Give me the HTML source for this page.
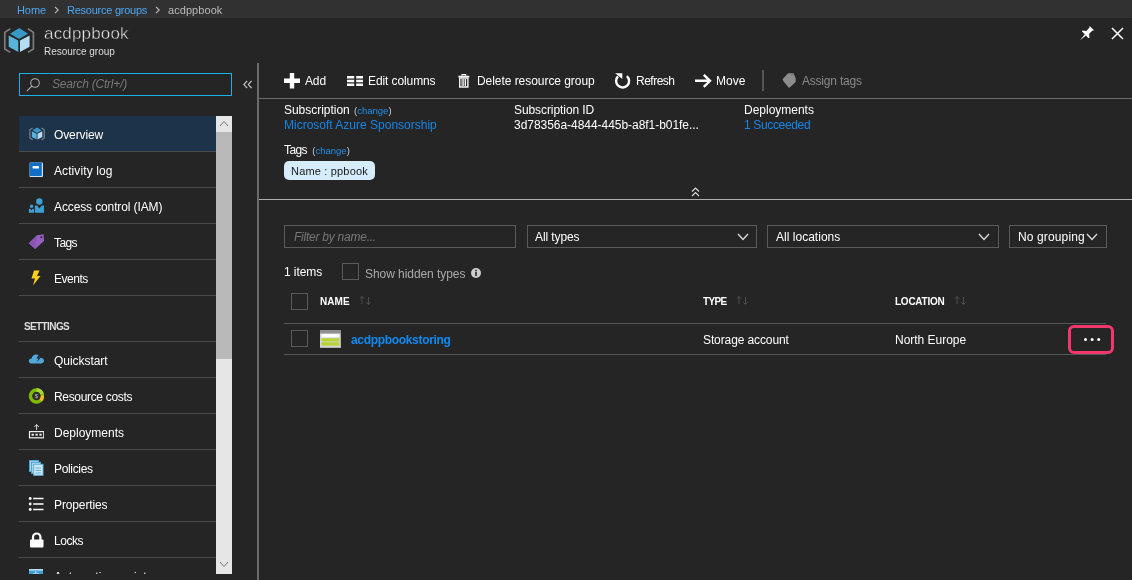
<!DOCTYPE html>
<html><head><meta charset="utf-8">
<style>
*{box-sizing:border-box;margin:0;padding:0}
html,body{width:1132px;height:580px;overflow:hidden;background:#252525;font-family:"Liberation Sans",sans-serif;color:#fff;font-size:12px}
.abs{position:absolute}
#bc{left:0;top:0;width:1132px;height:18px;background:#313131;font-size:11px;line-height:20px;color:#ccc}
#bc span{position:absolute;top:0;white-space:nowrap}
.lnk{color:#4da6f0}
.t{position:absolute;white-space:nowrap;line-height:1}
.hl{position:absolute;height:1px;background:#4a4a4a}
.mi{position:absolute;left:19px;width:197px;height:36px;border-bottom:1px solid #4a4a4a}
.mi .lab{position:absolute;left:35px;top:12px;font-size:12px;line-height:14px;white-space:nowrap}
.mi svg{position:absolute;left:9px;top:10px}
.tb{position:absolute;top:74px;font-size:12px;line-height:14px;white-space:nowrap}
.box{position:absolute;top:225px;height:23px;border:1px solid #5a5a5a;font-size:12px;line-height:23px;padding-left:7px;white-space:nowrap}
.cb{position:absolute;width:17px;height:17px;border:1px solid #5a5a5a}
.th{position:absolute;top:296px;font-size:10px;font-weight:bold;line-height:11px;white-space:nowrap}
.td{position:absolute;top:333px;font-size:12px;line-height:14px;white-space:nowrap}
</style></head><body><div id="root" style="position:absolute;left:0;top:0;width:1132px;height:580px;will-change:transform">
<div id="bc" class="abs">
<span class="lnk" style="left:17px"><span style="letter-spacing:-0.07px">Home</span></span>
<svg class="abs" style="left:54px;top:6px" width="6" height="8" viewBox="0 0 6 8"><path d="M1 0.8 L4.2 4 L1 7.2" stroke="#bdbdbd" stroke-width="1.1" fill="none"/></svg>
<span class="lnk" style="left:67px"><span style="letter-spacing:-0.25px">Resource groups</span></span>
<svg class="abs" style="left:155px;top:6px" width="6" height="8" viewBox="0 0 6 8"><path d="M1 0.8 L4.2 4 L1 7.2" stroke="#bdbdbd" stroke-width="1.1" fill="none"/></svg>
<span style="left:168px;color:#bbb"><span style="letter-spacing:0.06px">acdppbook</span></span>
</div>

<!-- header -->
<svg class="abs" style="left:3px;top:26px" width="32" height="30" viewBox="0 0 32 30">
<path d="M7.3 2.8 L1.8 6.4 L1.8 23 L7.3 26.4" fill="none" stroke="#7c7c7c" stroke-width="1.7"/>
<path d="M24.9 2.8 L30.4 6.4 L30.4 23 L24.9 26.4" fill="none" stroke="#7c7c7c" stroke-width="1.7"/>
<path d="M16.1 2.1 L25.1 7.7 L16.1 13 L7.1 7.7 Z" fill="#3999c6"/>
<path d="M5.7 9.6 L15.3 14.4 L15.3 26 L5.7 20.8 Z" fill="#59b4d9"/>
<path d="M26.6 9.6 L17 14.4 L17 26 L26.6 20.8 Z" fill="#b8dcef"/>
</svg>
<div class="t" style="left:44px;top:24px;font-size:17px;line-height:20px;color:#f0f0f0;-webkit-text-stroke:0.45px #252525"><span style="letter-spacing:0.18px">acdppbook</span></div>
<div class="t" style="left:44px;top:46px;font-size:10px;line-height:11px;color:#ddd"><span style="letter-spacing:-0.03px">Resource group</span></div>

<!-- pin / close -->
<svg class="abs" style="left:1080px;top:26px" width="15" height="15" viewBox="0 0 15 15">
<path d="M9.7 0 L14 4.3 L12.2 4.8 L9.2 7.8 L9.4 11.9 L8.2 12 L5.9 9.4 L0 14.2 L4.8 8.2 L2 5.6 L2.2 4.6 L6.3 4.9 L9.3 1.8 Z" fill="#fff"/>
</svg>
<svg class="abs" style="left:1111px;top:27px" width="13" height="13" viewBox="0 0 13 13">
<path d="M1 1 L12 12 M12 1 L1 12" stroke="#fff" stroke-width="1.5" fill="none"/>
</svg>

<!-- left search -->
<div class="abs" style="left:19px;top:73px;width:213px;height:23px;border:1px solid #1cb0ea;"></div>
<svg class="abs" style="left:26px;top:77px" width="15" height="15" viewBox="0 0 15 15">
<circle cx="9" cy="6" r="4.3" fill="none" stroke="#b0b0b0" stroke-width="1.05"/>
<path d="M5.8 9.2 L0.8 14.2" stroke="#b0b0b0" stroke-width="1.1"/>
</svg>
<div class="t" style="left:52px;top:77px;font-size:12px;line-height:14px;font-style:italic;color:#787878"><span style="letter-spacing:-0.23px">Search (Ctrl+/)</span></div>
<svg class="abs" style="left:242.8px;top:79.5px" width="10" height="10" viewBox="0 0 10 10">
<path d="M4.2 0.8 L0.9 4.5 L4.2 8.2 M8.6 0.8 L5.3 4.5 L8.6 8.2" stroke="#d4d4d4" stroke-width="1.1" fill="none"/>
</svg>

<!-- vertical divider -->
<div class="abs" style="left:257px;top:63px;width:2px;height:517px;background:#6a6a6a"></div>

<!-- scrollbar -->
<div class="abs" style="left:216px;top:116px;width:16px;height:458px;background:#e6e6e6"></div>
<div class="abs" style="left:216px;top:132px;width:16px;height:227px;background:#b9b9b9"></div>
<svg class="abs" style="left:219px;top:120px" width="10" height="7" viewBox="0 0 10 7"><path d="M1 6 L5 1.5 L9 6" stroke="#777" fill="none" stroke-width="1"/></svg>
<svg class="abs" style="left:219px;top:561px" width="10" height="7" viewBox="0 0 10 7"><path d="M1 1 L5 5.5 L9 1" stroke="#777" fill="none" stroke-width="1"/></svg>

<!-- menu -->
<div class="mi" style="top:116px;background:#1d3349"><svg style="left:10px" width="16" height="16" viewBox="0 0 32 30">
<path d="M7.3 2.8 L1.8 6.4 L1.8 23 L7.3 26.4" fill="none" stroke="#7f8a96" stroke-width="2.2"/>
<path d="M24.9 2.8 L30.4 6.4 L30.4 23 L24.9 26.4" fill="none" stroke="#7f8a96" stroke-width="2.2"/>
<path d="M16.1 2.1 L25.1 7.7 L16.1 13 L7.1 7.7 Z" fill="#3999c6"/>
<path d="M5.7 9.6 L15.3 14.4 L15.3 26 L5.7 20.8 Z" fill="#59b4d9"/>
<path d="M26.6 9.6 L17 14.4 L17 26 L26.6 20.8 Z" fill="#b8dcef"/></svg><div class="lab"><span style="letter-spacing:-0.12px">Overview</span></div></div>
<div class="mi" style="top:152px"><svg width="16" height="16" viewBox="0 0 16 16"><rect x="1.5" y="0.5" width="13.5" height="14.5" rx="1" fill="#cfe3f6"/><rect x="1.5" y="0.5" width="12.3" height="13.5" rx="0.8" fill="#0f6fc6"/><rect x="4.6" y="4" width="6.4" height="2.5" rx="0.6" fill="#fff"/></svg><div class="lab"><span style="letter-spacing:0.09px">Activity log</span></div></div>
<div class="mi" style="top:188px"><svg width="16" height="16" viewBox="0 0 16 16"><circle cx="11.3" cy="3.5" r="3.2" fill="#3e9fd2"/><path d="M6.9 7.5 L9 7.5 L11.4 10.6 L13.8 7.5 L16 7.5 L16 14.8 L6.9 14.8 Z" fill="#3e9fd2"/><circle cx="3.6" cy="8.3" r="1.7" fill="#3e9fd2"/><path d="M0.9 10.8 L2.3 10.8 L3.5 12.4 L4.7 10.8 L6 10.8 L6 14.8 L0.9 14.8 Z" fill="#3e9fd2"/></svg><div class="lab"><span style="letter-spacing:-0.12px">Access control (IAM)</span></div></div>
<div class="mi" style="top:224px"><svg width="16" height="16" viewBox="0 0 16 16"><path d="M0.8 9.2 L9 1.2 L15.6 0.2 L16 7 L7.2 15 Z" fill="#9560bd"/><path d="M0.8 9.2 L9 1.2 L7.2 15 Z" fill="#8a55b3"/><circle cx="13.3" cy="3.2" r="1" fill="#252525"/></svg><div class="lab"><span style="letter-spacing:-0.58px">Tags</span></div></div>
<div class="mi" style="top:260px"><svg width="16" height="16" viewBox="0 0 16 16"><path d="M6 0.5 L11.5 0.5 L9 6 L12.5 6 L5 15.5 L7 8.5 L3.5 8.5 Z" fill="#fcd116"/></svg><div class="lab"><span style="letter-spacing:-0.47px">Events</span></div></div>
<div class="t" style="left:24px;top:321px;font-size:10px;line-height:11px;font-weight:bold;color:#ddd"><span style="letter-spacing:-0.61px">SETTINGS</span></div>
<div class="hl" style="left:19px;top:341px;width:197px"></div>
<div class="mi" style="top:342px"><svg width="16" height="16" viewBox="0 0 16 16"><path d="M3.8 11.5 C1.8 11.5 0.8 10.2 0.8 8.9 C0.8 7.3 2.2 6.3 3.6 6.5 C4.1 4.2 6 2.5 8.2 2.6 C10.3 2.7 11.6 4.2 11.9 5.8 C14 5.6 16 6.9 16 8.8 C16 10.4 14.6 11.5 13 11.5 Z" fill="#4fa9d8"/><path d="M10.2 3.4 L8.6 6.6 L10.4 6.6 L9 10.2 L12.8 5.6 L11 5.6 L12.4 3.4 Z" fill="#252525"/></svg><div class="lab"><span style="letter-spacing:-0.04px">Quickstart</span></div></div>
<div class="mi" style="top:378px"><svg width="16" height="16" viewBox="0 0 16 16"><circle cx="8.5" cy="8" r="6" fill="none" stroke="#7fba00" stroke-width="3.4"/><path d="M8.5 2 A6 6 0 0 1 14.2 6.2" fill="none" stroke="#a5d63a" stroke-width="3.4"/><path d="M14.45 7.4 A6 6 0 0 1 12.7 12.3" fill="none" stroke="#f5b922" stroke-width="3.4"/><circle cx="8.5" cy="8" r="3.4" fill="#333"/><text x="8.5" y="10.2" font-size="6" fill="#bbb" text-anchor="middle" font-family="Liberation Sans">$</text></svg><div class="lab"><span style="letter-spacing:-0.33px">Resource costs</span></div></div>
<div class="mi" style="top:414px"><svg width="16" height="16" viewBox="0 0 16 16"><path d="M8.6 0.6 L8.6 6 M6.3 3 L8.6 0.6 L10.9 3" stroke="#eee" stroke-width="0.9" fill="none"/><rect x="1.5" y="7.6" width="14.3" height="6.2" fill="none" stroke="#f2f2f2" stroke-width="1.2"/><rect x="3.6" y="9.7" width="2.2" height="2" fill="#f2f2f2"/><rect x="7.5" y="9.7" width="2.2" height="2" fill="#f2f2f2"/><rect x="11.4" y="9.7" width="2.2" height="2" fill="#f2f2f2"/></svg><div class="lab"><span style="letter-spacing:0.0px">Deployments</span></div></div>
<div class="mi" style="top:450px"><svg width="16" height="16" viewBox="0 0 16 16"><rect x="1.5" y="0.5" width="9" height="11" fill="#a9d5ee" stroke="#4ea6d6" stroke-width="1"/><rect x="3.5" y="2.3" width="9" height="11" fill="#a9d5ee" stroke="#4ea6d6" stroke-width="1"/><rect x="5.7" y="4.3" width="9.3" height="11" fill="#cfe8f6" stroke="#5fb2dc" stroke-width="1"/><path d="M7.5 8 L13 8 M7.5 10.5 L13 10.5 M7.5 13 L13 13" stroke="#59b4d9" stroke-width="1"/></svg><div class="lab"><span style="letter-spacing:-0.33px">Policies</span></div></div>
<div class="mi" style="top:486px"><svg width="16" height="16" viewBox="0 0 16 16"><path d="M5.2 2.5 L15.5 2.5 M5.2 8 L15.5 8 M5.2 13.5 L15.5 13.5" stroke="#fff" stroke-width="1.7"/><circle cx="2.2" cy="2.5" r="1.4" fill="#fff"/><circle cx="2.2" cy="8" r="1.4" fill="#fff"/><circle cx="2.2" cy="13.5" r="1.4" fill="#fff"/></svg><div class="lab"><span style="letter-spacing:-0.12px">Properties</span></div></div>
<div class="mi" style="top:522px"><svg width="16" height="16" viewBox="0 0 16 16"><path d="M5 8 L5 5.2 A3.7 3.7 0 0 1 12.4 5.2 L12.4 8" fill="none" stroke="#fff" stroke-width="2.2"/><rect x="2" y="7.5" width="13.5" height="8" rx="1" fill="#fff"/></svg><div class="lab"><span style="letter-spacing:-0.44px">Locks</span></div></div>
<div class="mi" style="top:558px;border:none;height:21px"><svg width="16" height="16" viewBox="0 0 16 16"><rect x="1" y="1" width="14" height="12" fill="#3e9fd2"/><rect x="1" y="1" width="14" height="1.6" fill="#b8dcef"/><rect x="7.4" y="3.2" width="1" height="3" fill="#dff0fa"/><rect x="5.5" y="5" width="1" height="1.5" fill="#dff0fa"/><rect x="9.5" y="5" width="1" height="1.5" fill="#dff0fa"/></svg><div class="lab" style="top:12px">Automation script</div></div>

<div class="abs" style="left:0;top:574px;width:257px;height:6px;background:#252525"></div>
<!-- toolbar -->
<svg class="abs" style="left:284px;top:73px" width="16" height="16" viewBox="0 0 16 16"><path d="M8 0 L8 15.6 M0 7.8 L16 7.8" stroke="#fff" stroke-width="4.4"/></svg>
<div class="tb" style="left:305px"><span style="letter-spacing:-0.13px">Add</span></div>
<svg class="abs" style="left:347px;top:76px" width="16" height="11" viewBox="0 0 16 11"><path d="M0 1.3 L7.2 1.3 M0 5 L7.2 5 M0 8.7 L7.2 8.7 M9.2 1.3 L16 1.3 M9.2 5 L16 5 M9.2 8.7 L16 8.7" stroke="#fff" stroke-width="2.6"/></svg>
<div class="tb" style="left:368px"><span style="letter-spacing:-0.1px">Edit columns</span></div>
<svg class="abs" style="left:458px;top:74px" width="12" height="14" viewBox="0 0 12 14"><path d="M0.3 2.6 L11.3 2.6" stroke="#f4f4f4" stroke-width="1.7" fill="none"/><path d="M4 1.8 L4 0.6 L7.6 0.6 L7.6 1.8" stroke="#f4f4f4" stroke-width="1.2" fill="none"/><path d="M1.7 4 L9.9 4 L9.9 13 L1.7 13 Z" fill="none" stroke="#f4f4f4" stroke-width="1.4"/><path d="M4.1 5 L4.1 12 M5.8 5 L5.8 12 M7.5 5 L7.5 12" stroke="#f4f4f4" stroke-width="1.1"/></svg>
<div class="tb" style="left:477px"><span style="letter-spacing:-0.05px">Delete resource group</span></div>
<svg class="abs" style="left:614px;top:72px" width="17" height="17" viewBox="0 0 17 17"><path d="M12.86 4.1 A6.5 6.5 0 1 1 4 4.4" fill="none" stroke="#fff" stroke-width="2.4"/><path d="M1.2 1.2 L8.3 1.2 L8.3 7 Z" fill="#fff"/></svg>
<div class="tb" style="left:636px"><span style="letter-spacing:-0.51px">Refresh</span></div>
<svg class="abs" style="left:694px;top:74px" width="18" height="14" viewBox="0 0 18 14"><path d="M1 6.8 L15.5 6.8 M9.8 0.8 L16 6.8 L9.8 12.8" stroke="#fff" stroke-width="2.4" fill="none"/></svg>
<div class="tb" style="left:716px"><span style="letter-spacing:0.05px">Move</span></div>
<div class="abs" style="left:762px;top:70px;width:2px;height:21px;background:#555"></div>
<svg class="abs" style="left:782px;top:73px" width="15" height="16" viewBox="0 0 15 16"><path d="M0.5 6.2 L6.1 0.2 L11.5 0.2 L13.7 5.3 L13.7 8.9 L7 15 L1.6 8.5 Z" fill="#8c8c8c"/><circle cx="10" cy="1.6" r="0.7" fill="#555"/></svg>
<div class="tb" style="left:802px;color:#8a8a8a"><span style="letter-spacing:-0.21px">Assign tags</span></div>
<div class="hl" style="left:259px;top:98px;width:873px;background:#6e6e6e"></div>

<!-- essentials -->
<div class="t" style="left:284px;top:103px;font-size:12px;line-height:14px"><span style="letter-spacing:-0.03px">Subscription</span> <span style="font-size:9.5px;color:#ccc;margin-left:1px">(<span style="color:#1e90ee">change</span>)</span></div>
<div class="t" style="left:284px;top:118px;font-size:12px;line-height:14px;color:#1486ea"><span style="letter-spacing:-0.0px">Microsoft Azure Sponsorship</span></div>
<div class="t" style="left:514px;top:103px;font-size:12px;line-height:14px"><span style="letter-spacing:-0.08px">Subscription ID</span></div>
<div class="t" style="left:514px;top:118px;font-size:12px;line-height:14px"><span style="letter-spacing:-0.04px">3d78356a-4844-445b-a8f1-b01fe...</span></div>
<div class="t" style="left:744px;top:103px;font-size:12px;line-height:14px"><span style="letter-spacing:-0.01px">Deployments</span></div>
<div class="t" style="left:744px;top:118px;font-size:12px;line-height:14px;color:#1486ea"><span style="letter-spacing:-0.35px">1 Succeeded</span></div>
<div class="t" style="left:284px;top:143px;font-size:12px;line-height:14px"><span style="letter-spacing:-0.6px">Tags</span> <span style="font-size:9.5px;color:#ccc;margin-left:2px">(<span style="color:#1e90ee">change</span>)</span></div>
<div class="abs" style="left:284px;top:161px;width:91px;height:19px;border-radius:5px;background:#d5ecfb;color:#1a1a1a;font-size:11px;line-height:20px;text-align:center;white-space:nowrap"><span style="letter-spacing:0.17px">Name : ppbook</span></div>
<svg class="abs" style="left:691px;top:187px" width="9" height="10" viewBox="0 0 9 10"><path d="M1 4.5 L4.5 1 L8 4.5 M1 9 L4.5 5.5 L8 9" stroke="#ddd" stroke-width="1.1" fill="none"/></svg>
<div class="hl" style="left:259px;top:199px;width:873px;background:#aeaeae"></div>

<!-- filters -->
<div class="box" style="left:284px;width:232px;padding-left:9px;font-style:italic;color:#777;font-size:12px"><span style="letter-spacing:-0.24px">Filter by name...</span></div>
<div class="box" style="left:527px;width:230px"><span style="letter-spacing:-0.1px">All types</span></div>
<div class="box" style="left:767px;width:232px;padding-left:8px"><span style="letter-spacing:0.02px">All locations</span></div>
<div class="box" style="left:1009px;width:98px;padding-left:8px"><span style="letter-spacing:0.13px">No grouping</span></div>
<svg class="abs" style="left:737px;top:233px" width="12" height="8" viewBox="0 0 12 8"><path d="M1 1 L6 6.5 L11 1" stroke="#ddd" fill="none" stroke-width="1.3"/></svg>
<svg class="abs" style="left:978px;top:233px" width="12" height="8" viewBox="0 0 12 8"><path d="M1 1 L6 6.5 L11 1" stroke="#ddd" fill="none" stroke-width="1.3"/></svg>
<svg class="abs" style="left:1086px;top:233px" width="12" height="8" viewBox="0 0 12 8"><path d="M1 1 L6 6.5 L11 1" stroke="#ddd" fill="none" stroke-width="1.3"/></svg>

<div class="t" style="left:284px;top:265px;font-size:12px;line-height:14px"><span style="letter-spacing:-0.07px">1 items</span></div>
<div class="cb" style="left:342px;top:263px"></div>
<div class="t" style="left:365px;top:267px;font-size:12px;line-height:14px;color:#aaa"><span style="letter-spacing:-0.06px">Show hidden types</span></div>
<svg class="abs" style="left:471px;top:268px" width="10" height="10" viewBox="0 0 10 10"><circle cx="5" cy="5" r="5" fill="#ccc"/><rect x="4.2" y="4" width="1.6" height="4" fill="#252525"/><rect x="4.2" y="1.8" width="1.6" height="1.5" fill="#252525"/></svg>

<div class="cb" style="left:291px;top:293px"></div>
<div class="th" style="left:320px"><span style="letter-spacing:0.05px">NAME</span></div>
<div class="th" style="left:703px"><span style="letter-spacing:-0.63px">TYPE</span></div>
<div class="th" style="left:895px"><span style="letter-spacing:-0.25px">LOCATION</span></div>
<svg class="abs" style="left:359px;top:295px" width="13" height="11" viewBox="0 0 13 11"><path d="M3 9 L3 1.5 M0.8 3.7 L3 1.5 L5.2 3.7 M9.5 2 L9.5 9.5 M7.3 7.3 L9.5 9.5 L11.7 7.3" stroke="#4e4e4e" fill="none" stroke-width="1"/></svg>
<svg class="abs" style="left:736px;top:295px" width="13" height="11" viewBox="0 0 13 11"><path d="M3 9 L3 1.5 M0.8 3.7 L3 1.5 L5.2 3.7 M9.5 2 L9.5 9.5 M7.3 7.3 L9.5 9.5 L11.7 7.3" stroke="#4e4e4e" fill="none" stroke-width="1"/></svg>
<svg class="abs" style="left:954px;top:295px" width="13" height="11" viewBox="0 0 13 11"><path d="M3 9 L3 1.5 M0.8 3.7 L3 1.5 L5.2 3.7 M9.5 2 L9.5 9.5 M7.3 7.3 L9.5 9.5 L11.7 7.3" stroke="#4e4e4e" fill="none" stroke-width="1"/></svg>

<div class="hl" style="left:284px;top:323px;width:822px;background:#555"></div>
<div class="cb" style="left:291px;top:330px"></div>
<svg class="abs" style="left:320px;top:330px" width="21" height="18" viewBox="0 0 21 18"><rect width="21" height="18" fill="#b4b4b4"/><rect width="20" height="17" fill="#d2d2d2"/><rect width="21" height="3.4" fill="#909090"/><rect x="1.6" y="4.1" width="17.6" height="3.3" fill="#fff"/><rect x="1.6" y="8.3" width="17.6" height="3.1" fill="#b8d432"/><rect x="1.6" y="12.3" width="17.6" height="3.3" fill="#b8d432"/></svg>
<div class="td" style="left:351px;color:#0f8af2;font-weight:bold;font-size:12px"><span style="letter-spacing:-0.32px">acdppbookstoring</span></div>
<div class="td" style="left:703px"><span style="letter-spacing:-0.11px">Storage account</span></div>
<div class="td" style="left:895px"><span style="letter-spacing:-0.02px">North Europe</span></div>
<div class="hl" style="left:284px;top:354px;width:822px;background:#555"></div>
<div class="abs" style="left:1067.5px;top:324.5px;width:46px;height:29px;border:3px solid #f2366e;border-radius:6px"></div>
<div class="abs" style="left:1083.7px;top:337.7px;width:3.2px;height:3.2px;border-radius:50%;background:#fff;box-shadow:6.6px 0 #fff,13.2px 0 #fff"></div>
</div></body></html>
